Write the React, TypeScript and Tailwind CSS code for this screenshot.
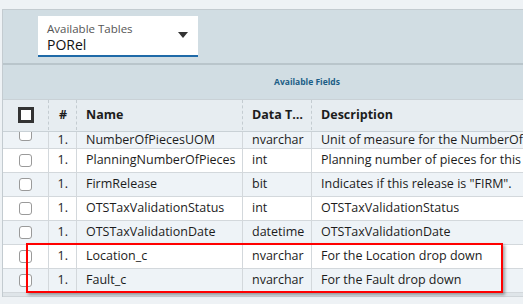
const rows = [
  { name: "NumberOfPiecesUOM", type: "nvarchar", desc: "Unit of measure for the NumberOfPiecesUOM" },
  { name: "PlanningNumberOfPieces", type: "int", desc: "Planning number of pieces for this release" },
  { name: "FirmRelease", type: "bit", desc: 'Indicates if this release is "FIRM".' },
  { name: "OTSTaxValidationStatus", type: "int", desc: "OTSTaxValidationStatus" },
  { name: "OTSTaxValidationDate", type: "datetime", desc: "OTSTaxValidationDate" },
  { name: "Location_c", type: "nvarchar", desc: "For the Location drop down" },
  { name: "Fault_c", type: "nvarchar", desc: "For the Fault drop down" }
];

function Row({ name, type, desc, alt, first }: { name: string; type: string; desc: string; alt: boolean; first: boolean }) {
  // first row is scrolled partly out of view
  const align = first ? "items-start leading-[16px]" : "items-center";
  return (
    <div className={`flex border-b border-[#d3d8dc] text-[12.5px] text-[#1c1c1c] ${first ? "h-[17px]" : "h-[24px]"} ${alt ? "bg-[#eef3f7]" : "bg-white"}`}>
      <div className={`flex h-full w-[46px] shrink-0 justify-center overflow-hidden border-r border-[#d3d8dc] ${first ? "items-start" : "items-center"}`}>
        <span className={`h-[13px] w-[13px] shrink-0 rounded-[3px] border border-[#9a9a9a] bg-white ${first ? "-mt-[4px]" : ""}`} />
      </div>
      <div className={`flex h-full w-[28px] shrink-0 justify-end border-r border-[#d3d8dc] pr-[8px] ${align}`}>1.</div>
      <div className={`flex h-full w-[166px] shrink-0 border-r border-[#d3d8dc] pl-[9px] whitespace-nowrap ${align}`}>{name}</div>
      <div className={`flex h-full w-[69px] shrink-0 overflow-hidden border-r border-[#d3d8dc] pl-[9px] whitespace-nowrap ${align}`}>{type}</div>
      <div className={`flex h-full w-[300px] shrink-0 pl-[9px] whitespace-nowrap ${align}`}>{desc}</div>
    </div>
  );
}

export default function App() {
  return (
    <div className="relative h-[304px] w-[523px] overflow-hidden bg-[#eef2f5] font-['Open_Sans',sans-serif]">
      <div className="ml-[2px] mt-[9px] w-[640px] border-l border-t border-[#c3cbd0] bg-[#dfe5e9]">
        <div className="h-[53px] bg-[#d1dde3] pl-[35px] pt-[6px]">
          <div className="relative h-[41px] w-[160px] border-b-2 border-[#1f6aa8] bg-white pl-[9px] pt-[5px]">
            <div className="text-[11.5px] leading-[15px] text-[#555]">Available Tables</div>
            <div className="text-[14px] leading-[18px] text-[#111]">PORel</div>
            <svg className="absolute right-[10px] top-[16px]" width="10" height="6" viewBox="0 0 10 6">
              <path d="M0 0 L10 0 L5 6 Z" fill="#333" />
            </svg>
          </div>
        </div>
        <div className="h-[2px] bg-[#b9c5cb]" />
        <div className="flex h-[34px] w-[608px] items-center justify-center bg-[#d1dde3] text-[8.5px] font-bold text-[#1b5d86]">
          Available Fields
        </div>
        <div className="flex h-[33px] items-center border-y border-[#c9d1d6] bg-[#e7edf1] pb-[1px] text-[12.5px] font-bold text-[#1c1c1c]">
          <div className="flex h-full w-[46px] shrink-0 items-center justify-center border-r border-dashed border-[#c4ccd1]">
            <span className="h-[16px] w-[16px] border-[3px] border-[#333] bg-white" />
          </div>
          <div className="flex h-full w-[28px] shrink-0 items-center justify-end border-r border-dashed border-[#c4ccd1] pr-[9px]">#</div>
          <div className="flex h-full w-[166px] shrink-0 items-center border-r border-dashed border-[#c4ccd1] pl-[9px]">Name</div>
          <div className="flex h-full w-[69px] shrink-0 items-center border-r border-dashed border-[#c4ccd1] pl-[9px] whitespace-nowrap">Data T…</div>
          <div className="flex h-full w-[300px] shrink-0 items-center pl-[9px]">Description</div>
        </div>
        <div>
          {rows.map((r, i) => (
            <Row key={r.name} {...r} alt={i % 2 === 0} first={i === 0} />
          ))}
        </div>
        <div className="h-[4px] border-b border-[#cfd5d9] bg-[#dfe5e9]" />
      </div>
      <div className="absolute left-[26px] top-[243px] h-[50px] w-[477px] border-2 border-[#ff0000] shadow-[2px_2px_3px_rgba(0,0,0,0.35)]" />
    </div>
  );
}
